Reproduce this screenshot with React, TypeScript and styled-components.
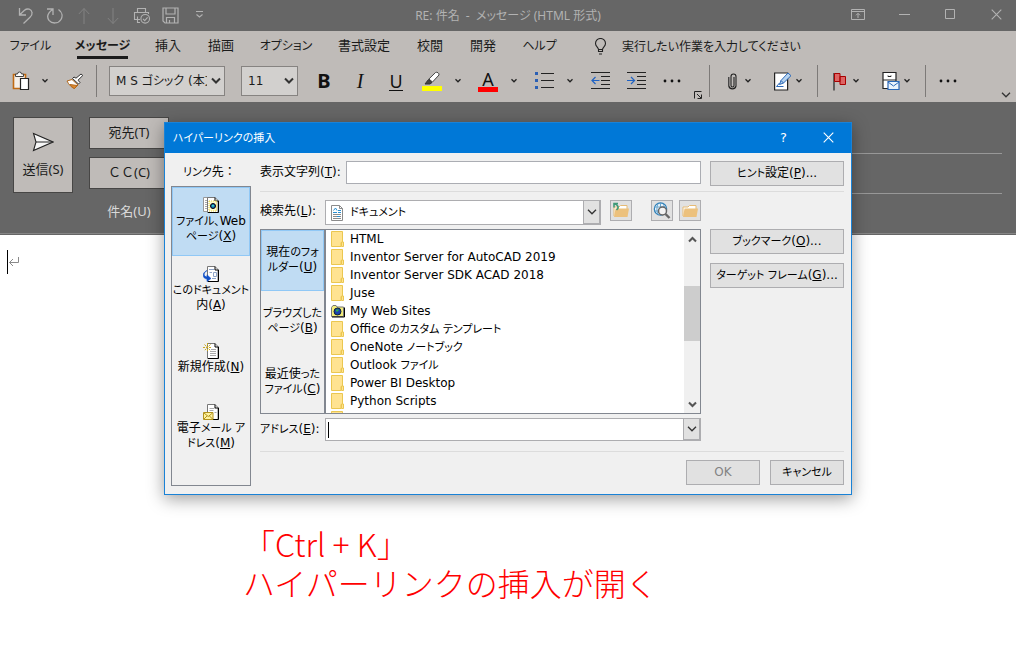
import React from "react";
import styled, { createGlobalStyle, css } from "styled-components";

const UI_FONT = `"Noto Sans", "Noto Sans CJK JP", sans-serif`;
const WIDE_FONT = `"DejaVu Sans", "Noto Sans CJK JP", sans-serif`;
const dim = "#666666";
const ribbon = "#bfbbb8";
const grey = "#adadb0";
const slate = "#828790";

const Global = createGlobalStyle`
  *, *::before, *::after { box-sizing: border-box; }
  body { margin: 0; background: #fff; }
  button, input, select { font: inherit; font-feature-settings: inherit; color: inherit; margin: 0; padding: 0; border: 0; background: none; border-radius: 0; outline: none; }
  button { line-height: inherit; }
  svg { display: block; flex: none; }
`;

const Page = styled.div`
  position: relative;
  display: flex;
  flex-direction: column;
  min-height: 100vh;
  background: #fff;
  font-family: ${UI_FONT};
  font-size: 12px;
  line-height: 15px;
  font-feature-settings: "palt";
  color: #1b1b1b;
`;

/* Kana are set one size down, so that they run narrower than the kanji. */
const Kana = styled.span`
  font-size: 11px;
`;

const FullWidth = styled.span`
  font-feature-settings: normal;
`;

/* ---------- title bar ---------- */

const TitleBar = styled.header`
  display: grid;
  grid-template-columns: 1fr auto 1fr;
  align-items: center;
  height: 31px;
  background: ${dim};
  color: #b2b2b2;
`;

const QuickAccess = styled.div`
  display: flex;
  padding-left: 11px;
`;

const QuickButton = styled.button<{ $faint?: boolean }>`
  display: flex;
  justify-content: center;
  align-items: center;
  width: 29px;
  height: 30px;
  color: ${(p) => (p.$faint ? "#828282" : "#b2b2b2")};
`;

const WindowTitle = styled.h1`
  margin: 0;
  font-size: 12px;
  font-weight: 400;
  line-height: 26px;
  white-space: pre;
`;

const WindowControls = styled.div`
  display: flex;
  justify-content: flex-end;
  gap: 6px;
`;

const WindowButton = styled.button`
  display: flex;
  justify-content: center;
  align-items: center;
  width: 40px;
  height: 26px;
  padding-bottom: 2px;
`;

/* ---------- ribbon ---------- */

const Ribbon = styled.div`
  background: ${ribbon};
  height: 71px;
`;

const Tabs = styled.nav`
  display: flex;
  align-items: flex-start;
  gap: 27px;
  padding: 4px 0 0 11px;
  height: 31px;
`;

const Tab = styled.button<{ $width: number; $kana?: boolean; $active?: boolean }>`
  width: ${(p) => p.$width}px;
  height: 24px;
  line-height: 21px;
  font-size: ${(p) => (p.$kana ? 12 : 13)}px;
  white-space: nowrap;
  display: flex;
  justify-content: center;
  border-bottom: 3px solid ${(p) => (p.$active ? "#1b1b1b" : "transparent")};
  font-weight: ${(p) => (p.$active ? 700 : 400)};
`;

const TellMe = styled.button`
  display: flex;
  align-items: center;
  gap: 15px;
  height: 22px;
  margin-left: 11px;
  font-size: 12px;
  white-space: nowrap;
`;

const Toolbar = styled.div`
  display: flex;
  align-items: center;
  height: 40px;
  padding: 0 0 2px 8px;
`;

const Tool = styled.button<{ $width?: number; $height?: number }>`
  display: flex;
  flex: none;
  flex-direction: column;
  align-items: center;
  justify-content: center;
  width: ${(p) => p.$width ?? 36}px;
  height: ${(p) => p.$height ?? 30}px;
`;

const Split = styled.div<{ $after?: number }>`
  display: flex;
  flex: none;
  margin-right: ${(p) => p.$after ?? 4}px;
`;

const Separator = styled.span<{ $before?: number; $after?: number }>`
  flex: none;
  width: 1px;
  height: 32px;
  margin: 0 ${(p) => p.$after ?? 10}px 0 ${(p) => p.$before ?? 14}px;
  background: #7d7a78;
`;

const PickerBox = styled.div<{ $width: number; $after: number }>`
  position: relative;
  flex: none;
  width: ${(p) => p.$width}px;
  height: 30px;
  margin-right: ${(p) => p.$after}px;
  border: 1px solid #868381;
  background: #d2d0ce;
  svg {
    position: absolute;
    right: 3px;
    top: 10px;
    pointer-events: none;
  }
`;

const PickerSelect = styled.select`
  appearance: none;
  width: 100%;
  height: 28px;
  padding: 0 17px 0 6px;
  font-family: ${WIDE_FONT};
  font-size: 12px;
`;

const Letter = styled.span<{ $kind: "b" | "i" | "u" | "a" }>`
  line-height: 24px;
  font-size: 20px;
  color: #111;
  ${(p) => p.$kind === "b" && css`font-weight: 700;`}
  ${(p) => p.$kind === "i" && css`font-family: "Liberation Serif", serif; font-style: italic;`}
  ${(p) => p.$kind === "u" && css`font-size: 18px; line-height: 18px; border-bottom: 1px solid #111;`}
  ${(p) => p.$kind === "a" && css`font-size: 18px; line-height: 16px;`}
`;

const ColorBar = styled.span<{ $color: string }>`
  width: 20px;
  height: 5px;
  background: ${(p) => p.$color};
`;

const Launcher = styled.div`
  display: flex;
  align-self: flex-end;
`;

const RibbonToggle = styled(Launcher)`
  margin-left: auto;
  padding-right: 5px;
`;

/* ---------- message header ---------- */

const MessageHeader = styled.section`
  display: grid;
  grid-template-columns: 60px 1fr;
  column-gap: 16px;
  height: 133px;
  padding: 12px 14px 0 13px;
  background: ${dim};
  border-bottom: 1px solid ${dim};
  box-shadow: inset 0 -1px #858585;
  font-size: 13px;
`;

const SendButton = styled.button`
  display: flex;
  flex-direction: column;
  align-items: center;
  gap: 10px;
  height: 76px;
  margin-top: 3px;
  padding-top: 14px;
  background: ${ribbon};
  border: 1px solid #474645;
`;

const Field = styled.label`
  display: flex;
  height: 40px;
  padding-top: 3px;
`;

const FieldButton = styled.button`
  width: 80px;
  height: 32px;
  padding-bottom: 1px;
  font-feature-settings: normal;
  background: ${ribbon};
  border: 1px solid #474645;
`;

const FieldName = styled.span`
  width: 80px;
  padding-top: 7px;
  text-align: center;
  color: #d9d9d9;
`;

const FieldInput = styled.input<{ $line?: boolean }>`
  flex: 1;
  min-width: 0;
  height: 37px;
  border-bottom: 1px solid ${(p) => (p.$line ? "#989898" : "transparent")};
`;

/* ---------- message body ---------- */

const MessageBody = styled.main`
  flex: 1;
  padding: 15px 7px;
`;

const CaretLine = styled.div`
  display: flex;
  height: 24px;
  svg {
    margin-top: 6px;
  }
`;

const Caret = styled.span<{ $height: number }>`
  width: 1px;
  height: ${(p) => p.$height}px;
  background: #000;
`;

const Note = styled.p`
  margin: 250px 0 0 236px;
  color: #ff0000;
  font-family: "Noto Sans CJK JP", sans-serif;
  font-feature-settings: normal;
  font-weight: 300;
  font-size: 32px;
  line-height: 39px;
`;

/* ---------- dialog ---------- */

const Overlay = styled.div`
  position: absolute;
  top: 122px;
  left: 0;
  right: 0;
  display: flex;
  justify-content: center;
`;

const Dialog = styled.section`
  width: 688px;
  max-width: 100%;
  background: #f0f0f0;
  border: 1px solid #1a82d6;
  box-shadow: 0 4px 16px rgba(0, 0, 0, 0.38);
  color: #000;
  font-family: ${WIDE_FONT};
`;

const DialogTitle = styled.header`
  display: flex;
  align-items: center;
  height: 30px;
  padding-left: 8px;
  background: #0078d7;
  color: #fff;
  h2 {
    flex: 1;
    margin: 0;
    font-size: 12px;
    font-weight: 400;
  }
`;

const TitleButton = styled.button`
  display: flex;
  align-items: center;
  justify-content: center;
  width: 45px;
  height: 30px;
  font-size: 13px;
  padding-bottom: 1px;
`;

const DialogBody = styled.div`
  display: grid;
  grid-template-columns: 80px 1fr;
  column-gap: 9px;
  padding: 8px 7px 8px 6px;
`;

const LinkTo = styled.div`
  display: flex;
  flex-direction: column;
`;

const LinkToTitle = styled.span`
  height: 25px;
  padding: 4px 0 0 12px;
`;

const LinkToList = styled.div`
  height: 300px;
  border: 1px solid ${slate};
`;

const Choice = styled.button<{ $height: number; $selected?: boolean }>`
  display: flex;
  flex-direction: column;
  align-items: center;
  justify-content: center;
  width: 100%;
  height: ${(p) => p.$height}px;
  padding-bottom: 2px;
  line-height: 15px;
  white-space: nowrap;
  border: 1px solid ${(p) => (p.$selected ? "#90c8f6" : "transparent")};
  background: ${(p) => (p.$selected ? "#c0dcf3" : "transparent")};
`;

const Main = styled.div`
  min-width: 0;
`;

const DisplayRow = styled.div`
  display: flex;
  height: 25px;
`;

const Caption = styled.label<{ $width: number }>`
  flex: none;
  width: ${(p) => p.$width}px;
  line-height: 23px;
  white-space: nowrap;
`;

const TextBox = styled.input`
  flex: 1;
  min-width: 0;
  height: 23px;
  margin-right: 9px;
  padding: 0 4px;
  background: #fff;
  border: 1px solid #abadb3;
`;

const PushButton = styled.button<{ $width: number }>`
  width: ${(p) => p.$width}px;
  height: 25px;
  background: #e1e1e1;
  border: 1px solid ${grey};
  white-space: nowrap;
  &:disabled {
    color: #838383;
  }
`;

const Rule = styled.hr<{ $top: number; $bottom: number }>`
  height: 1px;
  margin: ${(p) => p.$top}px 0 ${(p) => p.$bottom}px;
  border: 0;
  background: #dcdcdc;
`;

const Browse = styled.div`
  display: grid;
  grid-template-columns: minmax(0, 1fr) 134px;
  column-gap: 9px;
`;

const SideButtons = styled.div`
  display: flex;
  flex-direction: column;
  gap: 9px;
  padding-top: 29px;
`;

const LookIn = styled.div`
  display: flex;
  height: 25px;
  margin-bottom: 4px;
`;

const Combo = styled.div<{ $height: number }>`
  display: flex;
  align-items: center;
  flex: 1;
  min-width: 0;
  height: ${(p) => p.$height}px;
  padding-left: 2px;
  background: #fff;
  border: 1px solid ${grey};
`;

const ComboIcon = styled.span`
  padding: 0 3px;
`;

const ComboSelect = styled.select`
  appearance: none;
  flex: 1;
  min-width: 0;
  height: 100%;
  padding-left: 4px;
  padding-bottom: 1px;
  font-size: 11px;
`;

const ComboInput = styled.input`
  flex: 1;
  min-width: 0;
  height: 100%;
`;

const ComboArrow = styled.button`
  display: flex;
  align-items: center;
  justify-content: center;
  width: 17px;
  height: 100%;
  background: #e1e1e1;
  border: 1px solid ${grey};
  border-top-width: 0;
`;

const SmallButton = styled.button<{ $before: number }>`
  display: flex;
  align-items: center;
  justify-content: center;
  flex: none;
  width: 22px;
  height: 21px;
  margin-left: ${(p) => p.$before}px;
  background: #e1e1e1;
  border: 1px solid ${grey};
`;

const Files = styled.div`
  display: flex;
  height: 185px;
  margin-bottom: 4px;
  border: 1px solid ${slate};
`;

const Scopes = styled.div`
  flex: none;
  width: 63px;
`;

const FileList = styled.ul`
  flex: 1;
  min-width: 0;
  margin: 0;
  padding: 0 0 0 5px;
  list-style: none;
  overflow: hidden;
  background: #fff;
  border-left: 2px solid ${slate};
`;

const FileItem = styled.li`
  display: flex;
  align-items: center;
  gap: 5px;
  height: 18px;
  line-height: 18px;
  white-space: pre;
`;

const ScrollBar = styled.div`
  display: flex;
  flex-direction: column;
  width: 16px;
  background: #f0f0f0;
`;

const ScrollArrow = styled.button`
  display: flex;
  align-items: center;
  justify-content: center;
  height: 18px;
`;

const ScrollTrack = styled.div`
  flex: 1;
  padding-top: 38px;
`;

const ScrollThumb = styled.div`
  height: 55px;
  background: #cdcdcd;
`;

const AddressRow = styled.div`
  display: flex;
`;

const Footer = styled.footer`
  display: flex;
  justify-content: flex-end;
  gap: 10px;
`;

/* ---------- icons ---------- */

type IconProps = { w: number; h: number; children: React.ReactNode };
const Icon = ({ w, h, children }: IconProps) => (
  <svg width={w} height={h} viewBox={`0 0 ${w} ${h}`} fill="none" stroke="currentColor" aria-hidden="true">
    {children}
  </svg>
);

const Chevron = () => (
  <Icon w={8} h={6}>
    <path d="M1.500 1.300 4 3.800l2.500-2.500" strokeWidth="1.300" stroke="#222" />
  </Icon>
);
const BoldChevron = () => (
  <Icon w={10} h={8}>
    <path d="M1 1.500 5 5.500l4-4" strokeWidth="2" stroke="#333" />
  </Icon>
);
const ThinChevron = () => (
  <Icon w={10} h={6}>
    <path d="M1 .8 5 4.800 9 .8" strokeWidth="1.300" stroke="#333" />
  </Icon>
);
const ScrollChevron = ({ up }: { up?: boolean }) => (
  <Icon w={9} h={7}>
    <path d={up ? "M1 5.500 4.500 2 8 5.500" : "M1 1.500 4.500 5 8 1.500"} strokeWidth="2.100" stroke="#555" />
  </Icon>
);
const Dots = () => (
  <Icon w={18} h={4}>
    <g fill="#111" stroke="none">
      <circle cx="2" cy="2" r="1.400" />
      <circle cx="9" cy="2" r="1.400" />
      <circle cx="16" cy="2" r="1.400" />
    </g>
  </Icon>
);
const Undo = () => (
  <Icon w={16} h={18}>
    <path d="M1.500 1v7H8M2 7.500 6.500 3.300c3-2.600 7-1 7.500 2.200.4 2-.6 3.500-2 4.800L5.500 16.500" strokeWidth="1.300" />
  </Icon>
);
const Redo = () => (
  <Icon w={18} h={18}>
    <path d="M1 2h6v6M12.500 2.500C16 5 17 9 15 12.500c-2.600 4.400-9 4.600-12 .8C.8 10.200 1.500 6 6.800 2.200" strokeWidth="1.300" />
  </Icon>
);
const Arrow = ({ down }: { down?: boolean }) => (
  <Icon w={12} h={18}>
    <path d={down ? "M6 1v15.500M.8 11 6 16.500 11.200 11" : "M6 17V1.500M.8 7 6 1.500 11.200 7"} />
  </Icon>
);
const PrintCheck = () => (
  <Icon w={18} h={18}>
    <path d="M4.500 5.500V1.500h8v4M7 12.500H4.500M4.500 9.500V15.500H7M4.500 12.500h-3v-7h14V7" strokeWidth="1.100" />
    <circle cx="12.200" cy="11.800" r="4.300" strokeWidth="1.100" />
    <path d="m10 11.900 1.700 1.700 2.900-3.200" strokeWidth="1.100" />
  </Icon>
);
const Save = () => (
  <Icon w={17} h={17}>
    <path d="M1 1h15v15H3l-2-2zM4 1v6h9V1M4.500 16v-5.500h8V16M7.500 16v-3" strokeWidth="1.200" />
  </Icon>
);
const More = () => (
  <Icon w={9} h={9}>
    <path d="M1 .5h7M1.500 3.500l3 2.500 3-2.500" strokeWidth="1.100" />
  </Icon>
);
const RibbonMode = () => (
  <Icon w={14} h={11}>
    <path d="M.5.500h13v10H.5zM.5 2.500h13M7 9V4.500M5 6.300l2-2 2 2" />
  </Icon>
);
const Minimize = () => (
  <Icon w={11} h={11}>
    <path d="M0 5.500h11" />
  </Icon>
);
const Maximize = () => (
  <Icon w={11} h={11}>
    <path d="M.5.500h9v9h-9z" />
  </Icon>
);
const Close = () => (
  <Icon w={11} h={11}>
    <path d="m.7.700 9.600 9.600M10.300.700.700 10.300" strokeWidth="1.100" />
  </Icon>
);
const Bulb = () => (
  <Icon w={13} h={17}>
    <path d="M4.500 11.500c0-2-3-3-3-6a5 5 0 0 1 10 0c0 3-3 4-3 6zM4.500 11.500v2h4v-2M5 16h3" stroke="#222" strokeWidth="1.100" />
  </Icon>
);
const Paste = () => (
  <Icon w={18} h={20}>
    <path d="M1.500 3.500h12v14h-12z" fill="#f5efe8" stroke="#c06a12" strokeWidth="1.600" />
    <path d="M3.500 5.500V3H5.500a2 2 0 0 1 4 0h2v2.500z" fill="#fff" stroke="#444" />
    <path d="M8.500 7.500h8v11h-8z" fill="#fff" stroke="#222" strokeWidth="1.200" />
  </Icon>
);
const Painter = () => (
  <Icon w={18} h={17}>
    <path d="m1 8 5-1.500 6 5.500-3.500 3.500C5.500 14.500 3 12 1 8z" fill="#fff" stroke="#b0671c" />
    <path d="m4 11.500 7 1-2.500 3C6.500 14.500 5 13.300 4 11.500z" fill="#e08a2e" stroke="#b0671c" />
    <path d="M6.500 5.500 12.500 11l1.500-1.500-2-2.300L16.800 2.500 15 1l-5 4.200L8 4z" fill="#fff" stroke="#333" />
  </Icon>
);
const Highlighter = () => (
  <Icon w={20} h={20}>
    <path d="M13.500 1.500c1.500-1 4 .8 3.500 2.500L10.500 11l-3.600-3z" fill="#fff" stroke="#444" />
    <path d="m6.500 8.500 3.500 3-2 1.500H3z" fill="#444" stroke="#333" />
    <path d="M0 15h20v5H0z" fill="#ffff00" stroke="none" />
  </Icon>
);
const Bullets = () => (
  <Icon w={19} h={18}>
    <path d="M0 0h3v3H0zM0 7h3v3H0zM0 14h3v3H0z" fill="#2a5fb4" stroke="none" />
    <path d="M6 1.500h13M6 8.500h13M6 15.500h13" stroke="#222" />
  </Icon>
);
const Indent = ({ out }: { out?: boolean }) => (
  <Icon w={19} h={18}>
    <path d="M0 .5h19M0 16.500h19M10 4.500h9M10 8.500h9M10 12.500h9" stroke="#222" />
    <path d={out ? "M8.500 8.500H1M4.500 5 1 8.500 4.500 12" : "M0 8.500h7.500M4 5l3.500 3.500L4 12"} stroke="#1f62c4" strokeWidth="1.200" />
  </Icon>
);
const LaunchCorner = () => (
  <Icon w={8} h={8}>
    <path d="M.5 7.500V.5h7M3 3l4 4M7.500 3.500v4h-4" stroke="#222" />
  </Icon>
);
const Clip = () => (
  <Icon w={9} h={19}>
    <path d="M6 5v8.500a1.500 1.500 0 0 1-3 0V4.500a2.500 2.500 0 0 1 5 0V14a3.700 3.700 0 0 1-7.200 0V5" stroke="#222" strokeWidth="1.100" />
  </Icon>
);
const Signature = () => (
  <Icon w={18} h={19}>
    <path d="M.6 1h13v17H.6z" fill="#fff" stroke="#222" strokeWidth="1.200" />
    <path d="M5.500 12.500 7 8.500 14 1l3 2.700L9.500 11z" fill="#b8d4f0" stroke="#2a68b8" />
    <path d="m7 8.500 2.500 2.500M2.500 14.500l3-3.500M2.500 14.500h7" stroke="#2a68b8" />
  </Icon>
);
const Flag = () => (
  <Icon w={14} h={19}>
    <path d="M1 1v17.500" stroke="#222" strokeWidth="1.200" />
    <path d="M1.500 1.500H7v8H1.500zM7 4.500h5.500v8H7z" fill="#dd6463" stroke="#a80000" />
  </Icon>
);
const Archive = () => (
  <Icon w={18} h={20}>
    <path d="M1 1.500h13v16H1zM1 9h13" fill="#fff" stroke="#222" strokeWidth="1.200" />
    <path d="M6 4.500v1h3v-1" stroke="#222" />
    <path d="M6 10.500h11v8H6z" fill="#eaf3fc" stroke="#2a68b8" strokeWidth="1.200" />
    <path d="m6 11 5.500 4 5.500-4" stroke="#2a68b8" />
  </Icon>
);
const Send = () => (
  <Icon w={22} h={20}>
    <path d="m1.500 1.500 19.500 8.500-19.500 8.500 2.500-8.500z" fill="#f6f6f6" stroke="#222" strokeWidth="1.100" />
    <path d="M4 10h16" stroke="#222" />
  </Icon>
);
const Return = () => (
  <Icon w={12} h={12}>
    <path d="M10.500 1v5.500H1.500M5 3 1.500 6.500 5 10" stroke="#8a8a8a" />
  </Icon>
);
const Folder = () => (
  <Icon w={14} h={16}>
    <path d="M.5.500h11V11.500h-1.500v4H.5z" fill="#ffe391" stroke="#ebc750" />
    <path d="M10.500 15.500v-4.500h2v4.500z" fill="#ffe391" stroke="#ebc750" />
  </Icon>
);
const WebFolder = () => (
  <Icon w={14} h={14}>
    <path d="M.5 3.500 2 1.500h3l1 1.500h6.500v9.500H.5z" fill="#f3ec7a" stroke="#777" />
    <path d="M13.500 3.500v9.500H1" stroke="#000" />
    <circle cx="6.500" cy="7.500" r="3.500" fill="#1741b0" stroke="#123" />
    <path d="M5 5.500h3l-1 2H5z" fill="#2eb04a" stroke="none" />
  </Icon>
);
const DocIcon = () => (
  <Icon w={12} h={16}>
    <path d="M.5.500h8l3 3v12H.5z" fill="#fff" stroke="#8b8b8b" />
    <path d="M2 9.500h8M2 11.500h8M2 13.500h8" stroke="#8b8b8b" />
    <path d="M2 7.500h4M2.500 5.500 4.500 3l1.500 2.500M7 5.500h3M7 7.500h3M6 11.500h3" stroke="#2a8fd0" />
    <path d="M8.500.500v3h3" stroke="#8b8b8b" />
  </Icon>
);
const sheet = (
  <>
    <path d="M4.500.500h7.500l3 3v12H4.500z" fill="#fff" stroke="#777" />
    <path d="M12 .5V4h3.500v11.500H5" stroke="#000" />
  </>
);
const LinkFile = () => (
  <Icon w={17} h={17}>
    <path d="M.5.500h9v14h-9z" fill="#fff" stroke="#999" />
    <path d="M2 3.500h3M2 5.500h3M2 7.500h3M2 9.500h3M2 11.500h3" stroke="#aaa" />
    {sheet}
    <path d="M6 4h7.500v10H6z" fill="#fffbd0" stroke="#e8cf3a" strokeDasharray="1 1" />
    <circle cx="10" cy="9" r="2.500" fill="#1a6ab8" stroke="#000" />
    <path d="M9 8h2v1.500H9z" fill="#35d8c0" stroke="none" />
  </Icon>
);
const LinkHere = () => (
  <Icon w={17} h={17}>
    {sheet}
    <path d="M6 3.500h5M10.500 6.500h3v4h-3zM6.500 6.500h2.500M9 12.500h4" stroke="#8fa4c8" />
    <path d="M4 4.500c-4 2.500-3.500 6 0 6.500V8.800l4 3.700-4 3V13C-.8 12.500-1.500 7 4 4.500z" fill="#1050c8" stroke="#1050c8" strokeWidth=".6" />
  </Icon>
);
const LinkNew = () => (
  <Icon w={17} h={17}>
    {sheet}
    <path d="M8 6.500h5M7 8.500h6M7 10.500h6M7 12.500h6" stroke="#aaa" />
    <path d="M4.500 0v9M0 4.500h9M1.500 1.500l6 6M7.500 1.500l-6 6" stroke="#c9a820" strokeDasharray="2 1" />
  </Icon>
);
const LinkMail = () => (
  <Icon w={17} h={17}>
    {sheet}
    <path d="M6.500 4.500h5M6.500 6.500h4M11.500 8.500h2" stroke="#aaa" />
    <path d="M.5 8.500h9.500v7H.5z" fill="#fff3a0" stroke="#b3921c" />
    <path d="m1 9 4.300 3.500L9.500 9M1 15l3-3M9.500 15l-3-3" stroke="#b3921c" />
  </Icon>
);
const folderOpen = (
  <>
    <path d="M2 14V5h5l1.500-1.500H15V7" fill="#fff" stroke="#e6bb75" />
    <path d="M3.500 6.500H17L15.500 15H2z" fill="#ecc17d" stroke="none" />
  </>
);
const OpenFolder = () => (
  <Icon w={18} h={17}>
    {folderOpen}
  </Icon>
);
const UpFolder = () => (
  <Icon w={18} h={17}>
    {folderOpen}
    <path d="M2 5.500V1.500H6M2 1.500c4 1 5.500 4 2.500 6.500" stroke="#3f9a78" strokeWidth="1.600" />
  </Icon>
);
const WebSearch = () => (
  <Icon w={18} h={17}>
    <circle cx="7.500" cy="7" r="6.200" fill="#e6f2fa" stroke="#2d7fb8" strokeWidth="1.200" />
    <path d="M7.500 1v12M1.500 5h12M1.500 9h10M5 1.500C3.500 5 3.500 9 5 12.500M10 1.500c1.500 2.500 1.700 5 1 8" stroke="#5a9cc8" strokeWidth=".9" />
    <circle cx="9.500" cy="9" r="4" fill="#f3f3f3" stroke="#666" strokeWidth="1.500" />
    <path d="m12.500 12 4 4" stroke="#666" strokeWidth="2.400" />
  </Icon>
);

/* ---------- data ---------- */

const tabs: { name: string; width: number; kana?: boolean }[] = [
  { name: "ファイル", width: 39, kana: true },
  { name: "メッセージ", width: 51, kana: true },
  { name: "挿入", width: 26 },
  { name: "描画", width: 26 },
  { name: "オプション", width: 50, kana: true },
  { name: "書式設定", width: 52 },
  { name: "校閲", width: 26 },
  { name: "開発", width: 26 },
  { name: "ヘルプ", width: 33, kana: true },
];

const files: { latin: string; kana?: string; web?: boolean }[] = [
  { latin: "HTML" },
  { latin: "Inventor Server for AutoCAD 2019" },
  { latin: "Inventor Server SDK ACAD 2018" },
  { latin: "Juse" },
  { latin: "My Web Sites", web: true },
  { latin: "Office ", kana: "のカスタム テンプレート" },
  { latin: "OneNote ", kana: "ノートブック" },
  { latin: "Outlook ", kana: "ファイル" },
  { latin: "Power BI Desktop" },
  { latin: "Python Scripts" },
  { latin: "" },
];

const DropButton = ({ width, label }: { width: number; label: string }) => (
  <Tool $width={width} aria-label={label}>
    <Chevron />
  </Tool>
);

export default function App() {
  return (
    <Page>
      <Global />
      <TitleBar>
        <QuickAccess>
          <QuickButton aria-label="元に戻す"><Undo /></QuickButton>
          <QuickButton aria-label="やり直し"><Redo /></QuickButton>
          <QuickButton $faint aria-label="前へ"><Arrow /></QuickButton>
          <QuickButton $faint aria-label="次へ"><Arrow down /></QuickButton>
          <QuickButton aria-label="印刷"><PrintCheck /></QuickButton>
          <QuickButton aria-label="保存"><Save /></QuickButton>
          <QuickButton aria-label="その他"><More /></QuickButton>
        </QuickAccess>
        <WindowTitle>RE: 件名  -  メッセージ (HTML 形式)</WindowTitle>
        <WindowControls>
          <WindowButton aria-label="リボンの表示"><RibbonMode /></WindowButton>
          <WindowButton aria-label="最小化"><Minimize /></WindowButton>
          <WindowButton aria-label="最大化"><Maximize /></WindowButton>
          <WindowButton aria-label="閉じる"><Close /></WindowButton>
        </WindowControls>
      </TitleBar>

      <Ribbon>
        <Tabs>
          {tabs.map((tab, i) => (
            <Tab key={tab.name} $width={tab.width} $kana={tab.kana} $active={i === 1}>{tab.name}</Tab>
          ))}
          <TellMe><Bulb />実行したい作業を入力してください</TellMe>
        </Tabs>
        <Toolbar>
          <Tool $width={25} aria-label="貼り付け"><Paste /></Tool>
          <DropButton width={24} label="貼り付けオプション" />
          <Tool aria-label="書式のコピー"><Painter /></Tool>
          <Separator $before={3} $after={12} />
          <PickerBox $width={116} $after={16}>
            <PickerSelect aria-label="フォント"><option>M S ゴシック (本文)</option></PickerSelect>
            <BoldChevron />
          </PickerBox>
          <PickerBox $width={57} $after={8}>
            <PickerSelect aria-label="フォント サイズ"><option>11</option></PickerSelect>
            <BoldChevron />
          </PickerBox>
          <Tool aria-label="太字"><Letter $kind="b">B</Letter></Tool>
          <Tool aria-label="斜体"><Letter $kind="i">I</Letter></Tool>
          <Tool aria-label="下線"><Letter $kind="u">U</Letter></Tool>
          <Split>
            <Tool aria-label="蛍光ペン"><Highlighter /></Tool>
            <DropButton width={16} label="蛍光ペンの色" />
          </Split>
          <Split>
            <Tool aria-label="フォントの色"><Letter $kind="a">A</Letter><ColorBar $color="#ff0000" /></Tool>
            <DropButton width={16} label="色の選択" />
          </Split>
          <Split>
            <Tool aria-label="箇条書き"><Bullets /></Tool>
            <DropButton width={16} label="行頭文字" />
          </Split>
          <Tool aria-label="インデントを減らす"><Indent out /></Tool>
          <Tool aria-label="インデントを増やす"><Indent /></Tool>
          <Tool aria-label="その他の書式"><Dots /></Tool>
          <Launcher>
            <Tool $width={16} $height={10} aria-label="フォントの詳細"><LaunchCorner /></Tool>
          </Launcher>
          <Separator $before={3} />
          <Split $after={19}>
            <Tool $width={24} aria-label="添付"><Clip /></Tool>
            <DropButton width={8} label="添付の一覧" />
          </Split>
          <Split $after={0}>
            <Tool $width={24} aria-label="署名"><Signature /></Tool>
            <DropButton width={8} label="署名の一覧" />
          </Split>
          <Separator />
          <Split $after={19}>
            <Tool $width={24} aria-label="フラグ"><Flag /></Tool>
            <DropButton width={8} label="フラグの一覧" />
          </Split>
          <Split $after={0}>
            <Tool $width={24} aria-label="保管"><Archive /></Tool>
            <DropButton width={8} label="保管の一覧" />
          </Split>
          <Separator />
          <Tool $width={24} aria-label="その他のコマンド"><Dots /></Tool>
          <RibbonToggle>
            <Tool $width={10} $height={10} aria-label="リボンの切り替え"><ThinChevron /></Tool>
          </RibbonToggle>
        </Toolbar>
      </Ribbon>

      <MessageHeader>
        <SendButton><Send />送信(S)</SendButton>
        <div>
          <Field><FieldButton>宛先(T)</FieldButton><FieldInput $line aria-label="宛先" /></Field>
          <Field><FieldButton>ＣＣ(C)</FieldButton><FieldInput $line aria-label="CC" /></Field>
          <Field><FieldName>件名(U)</FieldName><FieldInput /></Field>
        </div>
      </MessageHeader>

      <MessageBody>
        <CaretLine><Caret $height={24} /><Return /></CaretLine>
        <Note>「Ctrl + K」<br />ハイパーリンクの挿入が開く</Note>
      </MessageBody>

      <Overlay>
        <Dialog role="dialog" aria-labelledby="dialog-title">
          <DialogTitle>
            <h2 id="dialog-title"><Kana>ハイパーリンクの挿入</Kana></h2>
            <TitleButton aria-label="ヘルプ">?</TitleButton>
            <TitleButton aria-label="閉じる"><Close /></TitleButton>
          </DialogTitle>
          <DialogBody>
            <LinkTo>
              <LinkToTitle><Kana>リンク</Kana>先<FullWidth>：</FullWidth></LinkToTitle>
              <LinkToList>
                <Choice $height={69} $selected><LinkFile /><span><Kana>ファイル、</Kana>Web<br /><Kana>ページ</Kana>(<u>X</u>)</span></Choice>
                <Choice $height={69}><LinkHere /><span><Kana>このドキュメント</Kana><br />内(<u>A</u>)</span></Choice>
                <Choice $height={69}><LinkNew /><span>新規作成(<u>N</u>)</span></Choice>
                <Choice $height={69}><LinkMail /><span>電子<Kana>メール ア</Kana><br /><Kana>ドレス</Kana>(<u>M</u>)</span></Choice>
              </LinkToList>
            </LinkTo>
            <Main>
              <DisplayRow>
                <Caption $width={86} htmlFor="display">表示文字列(<u>T</u>):</Caption>
                <TextBox id="display" />
                <PushButton $width={134}><Kana>ヒント</Kana>設定(<u>P</u>)...</PushButton>
              </DisplayRow>
              <Rule $top={5} $bottom={8} />
              <Browse>
                <div>
                  <LookIn>
                    <Caption $width={65} htmlFor="lookin">検索先(<u>L</u>):</Caption>
                    <Combo $height={25}>
                      <ComboIcon><DocIcon /></ComboIcon>
                      <ComboSelect id="lookin"><option>ドキュメント</option></ComboSelect>
                      <ComboArrow tabIndex={-1} aria-label="検索先を開く"><ThinChevron /></ComboArrow>
                    </Combo>
                    <SmallButton $before={9} aria-label="上へ"><UpFolder /></SmallButton>
                    <SmallButton $before={19} aria-label="Web の検索"><WebSearch /></SmallButton>
                    <SmallButton $before={6} aria-label="ファイルの参照"><OpenFolder /></SmallButton>
                  </LookIn>
                  <Files>
                    <Scopes>
                      <Choice $height={61} $selected><span>現在<Kana>のフォ</Kana><br /><Kana>ルダー</Kana>(<u>U</u>)</span></Choice>
                      <Choice $height={61}><span><Kana>ブラウズした</Kana><br /><Kana>ページ</Kana>(<u>B</u>)</span></Choice>
                      <Choice $height={61}><span>最近使<Kana>った</Kana><br /><Kana>ファイル</Kana>(<u>C</u>)</span></Choice>
                    </Scopes>
                    <FileList>
                      {files.map((file) => (
                        <FileItem key={file.latin}>
                          {file.web ? <WebFolder /> : <Folder />}
                          <span>{file.latin}{file.kana && <Kana>{file.kana}</Kana>}</span>
                        </FileItem>
                      ))}
                    </FileList>
                    <ScrollBar>
                      <ScrollArrow aria-label="上へスクロール"><ScrollChevron up /></ScrollArrow>
                      <ScrollTrack><ScrollThumb /></ScrollTrack>
                      <ScrollArrow aria-label="下へスクロール"><ScrollChevron /></ScrollArrow>
                    </ScrollBar>
                  </Files>
                  <AddressRow>
                    <Caption $width={65} htmlFor="address"><Kana>アドレス</Kana>(<u>E</u>):</Caption>
                    <Combo $height={23}>
                      <Caret $height={16} />
                      <ComboInput id="address" />
                      <ComboArrow tabIndex={-1} aria-label="アドレスの一覧"><ThinChevron /></ComboArrow>
                    </Combo>
                  </AddressRow>
                </div>
                <SideButtons>
                  <PushButton $width={134}><Kana>ブックマーク</Kana>(<u>O</u>)...</PushButton>
                  <PushButton $width={134}><Kana>ターゲット フレーム</Kana>(<u>G</u>)...</PushButton>
                </SideButtons>
              </Browse>
              <Rule $top={10} $bottom={8} />
              <Footer>
                <PushButton $width={74} disabled>OK</PushButton>
                <PushButton $width={74}><Kana>キャンセル</Kana></PushButton>
              </Footer>
            </Main>
          </DialogBody>
        </Dialog>
      </Overlay>
    </Page>
  );
}
